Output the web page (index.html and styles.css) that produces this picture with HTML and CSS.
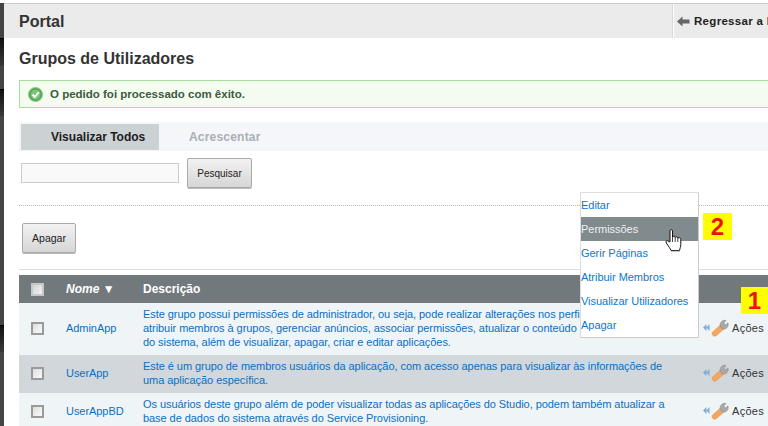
FILE: index.html
```html
<!DOCTYPE html>
<html lang="pt">
<head>
<meta charset="utf-8">
<title>Grupos de Utilizadores</title>
<link rel="stylesheet" href="styles.css">
</head>
<body>
<div class="app">
  <aside class="rail">
    <div class="rail-block plain h35"></div>
    <div class="rail-block shade h28"></div>
    <div class="rail-block plain h23"></div>
    <div class="rail-block shade h27"></div>
    <div class="rail-block plain h209"></div>
    <div class="rail-block shade h27"></div>
    <div class="rail-block plain grow"></div>
  </aside>
  <main class="main">
    <header class="topbar">
      <h1 class="portal">Portal</h1>
      <a class="back">
        <svg class="back-icon" width="13" height="11" viewBox="0 0 13 11"><path d="M0 5.500 5.500 0.500V3.500H12.500V7.500H5.500V10.500Z" fill="#666"/></svg>
        <span>Regressar a Home</span>
      </a>
    </header>
    <div class="content">
      <h2 class="title">Grupos de Utilizadores</h2>
      <div class="notice">
        <svg width="15" height="15" viewBox="0 0 15 15"><circle cx="7.500" cy="7.500" r="7" fill="#58a858" stroke="#8fc78f"/><circle cx="7.500" cy="7.500" r="4.800" fill="#7cc47c"/><path d="M4.500 7.500 6.800 10 10.800 5" fill="none" stroke="#fff" stroke-width="2"/></svg>
        <span>O pedido foi processado com êxito.</span>
      </div>
      <nav class="tabs">
        <a class="tab active">Visualizar Todos</a>
        <a class="tab">Acrescentar</a>
      </nav>
      <form class="search">
        <div class="field"></div>
        <button class="btn" type="button">Pesquisar</button>
      </form>
      <div class="dots"></div>
      <button class="btn del" type="button">Apagar</button>
      <div class="rule"></div>
      <table class="grid">
        <colgroup><col class="c-check"><col class="c-name"><col class="c-desc"><col class="c-act"></colgroup>
        <thead>
          <tr><th><span class="box head"></span></th><th><em>Nome</em> <span class="sort">▼</span></th><th>Descrição</th><th></th></tr>
        </thead>
        <tbody>
          <tr class="odd">
            <td><span class="box"></span></td><td>AdminApp</td>
            <td>Este grupo possui permissões de administrador, ou seja, pode realizar alterações nos perfis,<br>atribuir membros à grupos, gerenciar anúncios, associar permissões, atualizar o conteúdo da base<br>do sistema, além de visualizar, apagar, criar e editar aplicações.</td>
            <td><span class="act"><svg class="act-icon" width="27" height="18" viewBox="0 0 27 18"><use href="#tool"/></svg>Ações</span></td>
          </tr>
          <tr class="even">
            <td><span class="box"></span></td><td>UserApp</td>
            <td>Este é um grupo de membros usuários da aplicação, com acesso apenas para visualizar às informações de<br>uma aplicação específica.</td>
            <td><span class="act"><svg class="act-icon" width="27" height="18" viewBox="0 0 27 18"><use href="#tool"/></svg>Ações</span></td>
          </tr>
          <tr class="odd">
            <td><span class="box"></span></td><td>UserAppBD</td>
            <td>Os usuários deste grupo além de poder visualizar todas as aplicações do Studio, podem também atualizar a<br>base de dados do sistema através do Service Provisioning.</td>
            <td><span class="act"><svg class="act-icon" width="27" height="18" viewBox="0 0 27 18"><use href="#tool"/></svg>Ações</span></td>
          </tr>
        </tbody>
      </table>
    </div>
  </main>
</div>

<ul class="menu">
  <li>Editar</li>
  <li class="hot">Permissões</li>
  <li>Gerir Páginas</li>
  <li>Atribuir Membros</li>
  <li>Visualizar Utilizadores</li>
  <li>Apagar</li>
</ul>
<svg class="hand" width="18" height="23" viewBox="0 0 18 23"><path d="M5 13V1.800C5 .2 7.500 .2 7.500 1.800V8C8 6.800 10.200 6.800 10.200 8.500 10.700 7.300 12.800 7.500 12.800 9.200 13.500 8.300 15.800 8.500 15.800 10.500V15.500C15.800 18 15 19 14.500 21.500H6C5.500 19.500 3.500 17.500 1.300 14 .3 12 1.800 11 3 12Z" fill="#fff" stroke="#111" stroke-width="1"/><path d="M7.500 8V13M10.200 8.500V13M12.800 9.200V13" stroke="#111" stroke-width=".8" fill="none"/><path d="M6.200 22.300H15" stroke="#bbb" stroke-width="1"/></svg>
<div class="tag tag-two">2</div>
<div class="tag tag-one">1</div>

<svg class="defs" width="0" height="0">
  <defs>
    <g id="tool">
      <path d="M4.500 5 1 8.500 4.500 12ZM7.500 5 4.500 8.500 7.500 12Z" fill="#7fabd8"/>
      <path d="M10.500 13 18.500 6 22 10 14.500 16.500C11.500 18.500 9 15.500 10.500 13Z" fill="#f4a561" stroke="#e0913f" stroke-width=".5"/>
      <path d="M18 7.500C17.500 3 21 .5 24 1.500L21.800 4 23.500 6 26 3.800C27 7.500 24.500 10.500 21 10Z" fill="#a8a8a8" stroke="#858585" stroke-width=".5"/>
    </g>
  </defs>
</svg>
</body>
</html>
```

FILE: styles.css
```css
* { box-sizing: border-box; }
html, body { margin: 0; padding: 0; }
body {
  width: 768px;
  height: 426px;
  overflow: hidden;
  position: relative;
  background: #fff;
  font-family: "Liberation Sans", Arial, sans-serif;
  font-size: 12px;
  color: #222;
}
.app { display: flex; height: 426px; padding-top: 3px; }
.rail { width: 4px; flex: none; display: flex; flex-direction: column; }
.rail-block.plain { background: #444; }
.rail-block.shade { background: linear-gradient(#111, #3a3a3a); border-top: 1px solid #000; }
.h35 { height: 35px; }
.h28 { height: 28px; }
.h23 { height: 23px; }
.h27 { height: 27px; }
.h209 { height: 209px; }
.grow { flex: 1; }
.main { flex: 1; min-width: 0; display: flex; flex-direction: column; }
.topbar {
  height: 35px;
  flex: none;
  display: flex;
  justify-content: space-between;
  background: #ebebeb;
  border-top: 1px solid #ccc;
}
.portal {
  margin: 0;
  padding-left: 15px;
  font-size: 16px;
  line-height: 35px;
  color: #333;
}
.back {
  width: 96px;
  display: flex;
  align-items: center;
  gap: 4px;
  padding-left: 4px;
  border-left: 1px solid #d8d8d8;
  box-shadow: inset 1px 0 0 #fff;
  white-space: nowrap;
  font-size: 11.500px;
  font-weight: bold;
  letter-spacing: .3px;
  color: #222;
  overflow: hidden;
}
.back-icon { flex: none; }
.content { padding-left: 15px; }
.title {
  margin: 0;
  padding-top: 11px;
  height: 42px;
  font-size: 16px;
  line-height: 19px;
  color: #333;
}
.notice {
  height: 28px;
  display: flex;
  align-items: center;
  gap: 7px;
  padding-left: 8px;
  background: #f4fcf0;
  border-top: 1px solid #a8dd9f;
  border-bottom: 1px solid #a8dd9f;
  border-left: 1px solid #a8dd9f;
  font-size: 11.500px;
  font-weight: bold;
  color: #3d5a40;
}
.tabs {
  margin-top: 14px;
  height: 29px;
  display: flex;
  align-items: center;
  padding-left: 2px;
  gap: 30px;
  background: #f5f6fa;
}
.tab {
  font-weight: bold;
  letter-spacing: .2px;
  color: #a9afb3;
}
.tab.active {
  height: 26px;
  width: 138px;
  padding-left: 30px;
  line-height: 26px;
  letter-spacing: 0;
  background: #ccd1d4;
  color: #1c1c1c;
}
.search {
  display: flex;
  align-items: center;
  gap: 8px;
  height: 30px;
  margin: 7px 0 0 2px;
}
.field {
  width: 158px;
  height: 20px;
  background: #f9f9f9;
  border: 1px solid #ccc;
}
.btn {
  display: block;
  height: 30px;
  padding: 0;
  border: 1px solid #a9a9a9;
  border-radius: 2px;
  background: linear-gradient(#f2f2f2, #d6d6d6);
  box-shadow: 0 1px 0 #bbb;
  font-family: "Liberation Sans", Arial, sans-serif;
  font-size: 10px;
  color: #222;
  width: 65px;
}
.dots { margin-top: 17px; border-top: 1px dotted #bbb; }
.btn.del { margin: 17px 0 0 3px; width: 54px; font-size: 10.500px; }
.rule { margin-top: 16px; border-top: 1px solid #ddd; }
.grid {
  margin-top: 5px;
  width: 749px;
  table-layout: fixed;
  border-collapse: collapse;
  font-size: 11px;
  line-height: 14px;
  color: #0b6fc2;
  letter-spacing: -.06px;
}
.c-check { width: 47px; }
.c-name { width: 77px; }
.c-desc { width: 559px; }
.c-act { width: 66px; }
.grid th {
  height: 28px;
  padding: 0;
  background: #72797d;
  color: #fff;
  font-size: 12px;
  letter-spacing: 0;
  font-weight: bold;
  text-align: left;
}
.grid td { padding: 4px 0 6px; vertical-align: middle; white-space: nowrap; }
.grid td:first-child, .grid th:first-child { padding-left: 12px; }
.odd td { background: #eff4f7; }
.even td { background: #d1d7da; }
.sort { font-style: normal; font-size: 12px; line-height: 12px; }
.box {
  display: block;
  width: 13px;
  height: 13px;
  border: 2px solid #9a9a9a;
  background: linear-gradient(135deg, #dedede, #fafafa);
}
.box.head { border-color: #c8c8c8; background: linear-gradient(135deg, #d4d4d4, #f2f2f2); }
.act {
  display: flex;
  align-items: center;
  gap: 3px;
  color: #333;
  letter-spacing: .3px;
}
.menu {
  position: absolute;
  left: 580px;
  top: 192px;
  width: 119px;
  margin: 0;
  padding: 0;
  list-style: none;
  background: #fff;
  border: 1px solid #ccc;
  border-top-color: #ddd;
  border-left-color: #ddd;
  font-size: 11px;
  color: #0a78d2;
}
.menu li { height: 24px; line-height: 24px; white-space: nowrap; letter-spacing: -.03px; }
.menu .hot { background: #818b8e; color: #f0f0f0; }
.hand { position: absolute; left: 665px; top: 229px; }
.tag {
  position: absolute;
  background: #ffff00;
  color: #ee1111;
  font-weight: bold;
  font-size: 24px;
  text-align: center;
}
.tag-two { left: 703px; top: 213px; width: 29px; height: 27px; line-height: 27px; }
.tag-one { left: 741px; top: 287px; width: 27px; height: 27px; line-height: 27px; }
.defs { position: absolute; }
```
